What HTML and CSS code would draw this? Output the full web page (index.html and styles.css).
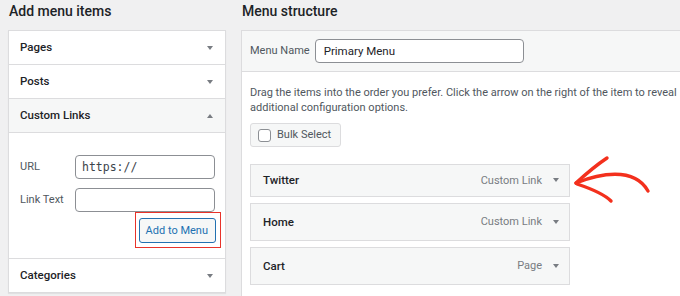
FILE: index.html
```html
<!DOCTYPE html>
<html>

<head>
	<meta charset="utf-8">
	<title>Menus</title>
	<meta name="viewport" content="width=device-width, initial-scale=1.0">
	<link rel="stylesheet" href="styles.css">
</head>

<body>
	<div class="page">
		<div class="col-left">
			<h2>Add menu items</h2>
			<div class="accordion">
				<div class="acc-row">Pages <span class="caret"></span></div>
				<div class="acc-row">Posts <span class="caret"></span></div>
				<div class="acc-row open">Custom Links <span class="caret up"></span></div>
				<div class="acc-body">
					<div class="field">
						<label>URL</label>
						<input type="text" class="mono" value="https://">
					</div>
					<div class="field">
						<label>Link Text</label>
						<input type="text">
					</div>
					<div class="btn-row">
						<div class="highlight">
							<button class="add-btn">Add to Menu</button>
						</div>
					</div>
				</div>
				<div class="acc-row">Categories <span class="caret"></span></div>
			</div>
		</div>

		<div class="col-right">
			<h2>Menu structure</h2>
			<div class="structure">
				<div class="struct-head">
					<label>Menu Name</label>
					<input type="text" class="name-input" value="Primary Menu">
				</div>
				<div class="struct-body">
					<p class="hint">Drag the items into the order you prefer. Click the arrow on the right of the item to reveal additional configuration options.</p>
					<div class="bulk"><span class="check"></span>Bulk Select</div>
					<ul class="items">
						<li class="item first">Twitter <span class="meta">Custom Link <span class="caret"></span></span></li>
						<li class="item">Home <span class="meta">Custom Link <span class="caret"></span></span></li>
						<li class="item">Cart <span class="meta">Page <span class="caret"></span></span></li>
					</ul>
				</div>
			</div>
		</div>
	</div>

	<!-- hand drawn pointer -->
	<svg class="pointer" viewBox="0 0 680 296" width="680" height="296">
		<g fill="none" stroke="#f3301d" stroke-width="3.4" stroke-linecap="round" stroke-linejoin="round">
			<path d="M576 183 C 598 174, 634 166, 648 191" />
			<path d="M576 183 C 588 172, 598 164, 607 158" />
			<path d="M577 184 C 592 189, 604 194, 611 201" />
		</g>
	</svg>
</body>

</html>
```

FILE: styles.css
```css
:root {
	--bg: #f0f0f1;
	--border: #dcdcde;
	--light: #f6f7f7;
	--text: #1d2327;
	--muted: #50575e;
	--blue: #2271b1;
}

body {
	margin: 0;
	background: var(--bg);
	color: var(--text);
	font: 11px/1.4 Roboto, 'Noto Sans', sans-serif;
	overflow: hidden;
}

.page {
	display: flex;
	gap: 15px;
	padding-left: 8px;
	width: 672px;
	height: 296px;
	overflow: hidden;
}

h2 {
	margin: 0;
	height: 30px;
	font-size: 14px;
	font-weight: 500;
	line-height: 23px;
	padding-left: 1px;
}

.col-left {
	width: 218px;
	flex: none;
}

.accordion {
	background: #fff;
	border: 1px solid var(--border);
	box-shadow: 0 1px 1px rgba(0, 0, 0, 0.06);
}

.acc-row {
	height: 33px;
	display: flex;
	align-items: center;
	justify-content: space-between;
	padding: 0 12px 0 11px;
	font-size: 11.5px;
	font-weight: 500;
	border-bottom: 1px solid var(--border);
}

.acc-row:last-child {
	border-bottom: none;
}

.acc-row.open {
	background: var(--light);
}

.caret {
	width: 0;
	height: 0;
	border-left: 3.5px solid transparent;
	border-right: 3.5px solid transparent;
	border-top: 4px solid #787c82;
	display: inline-block;
}

.caret.up {
	border-top: none;
	border-bottom: 4px solid #787c82;
}

.acc-body {
	border-bottom: 1px solid var(--border);
	padding: 22px 4px 10px 11px;
}

.field {
	display: flex;
	align-items: center;
	margin-bottom: 9px;
}

.field label {
	width: 55px;
	color: var(--muted);
	font-size: 11px;
}

input {
	width: 140px;
	height: 24px;
	box-sizing: border-box;
	border: 1px solid #8c8f94;
	border-radius: 4px;
	padding: 0 6px;
	font: 11.5px Roboto, sans-serif;
	color: var(--text);
	background: #fff;
}

input.mono {
	font-family: 'DejaVu Sans Mono', monospace;
	font-size: 11.5px;
	color: #3c434a;
}

.btn-row {
	display: flex;
	justify-content: flex-end;
	margin-top: -9px;
}

.highlight {
	border: 1.5px solid #e8332a;
	padding: 5px 4px 4px 3px;
}

.add-btn {
	display: block;
	height: 25px;
	padding: 0 7px 0 6px;
	background: var(--light);
	color: var(--blue);
	border: 1px solid var(--blue);
	border-radius: 3px;
	font: 11px Roboto, sans-serif;
}

.col-right {
	flex: 1;
}

.structure {
	background: #fff;
	border: 1px solid var(--border);
	border-right: none;
	min-height: 280px;
}

.struct-head {
	background: var(--light);
	border-bottom: 1px solid var(--border);
	height: 40px;
	display: flex;
	align-items: center;
	gap: 5px;
	padding-left: 8px;
}

.struct-head label {
	color: var(--muted);
	font-size: 11px;
}

.name-input {
	width: 209px;
	height: 24px;
	padding: 0 8px;
	font-size: 11.5px;
}

.struct-body {
	padding: 13px 8px 5px;
}

.hint {
	margin: 0;
	width: 430px;
	color: var(--muted);
	line-height: 15px;
}

.bulk {
	margin-top: 8px;
	display: inline-flex;
	align-items: center;
	gap: 6px;
	height: 22px;
	padding: 0 9px 0 7px;
	background: var(--light);
	border: 1px solid var(--border);
	border-radius: 3px;
	color: var(--muted);
}

.check {
	width: 11px;
	height: 11px;
	border: 1px solid #8c8f94;
	border-radius: 3px;
	background: #fff;
}

.items {
	list-style: none;
	margin: 17px 0 0;
	padding: 0;
	width: 320px;
}

.item {
	height: 38px;
	box-sizing: border-box;
	margin-bottom: 6px;
	padding: 0 10px 0 12px;
	background: var(--light);
	border: 1px solid var(--border);
	display: flex;
	align-items: center;
	justify-content: space-between;
	font-weight: 500;
	font-size: 11.5px;
}

.item.first {
	height: 33px;
}

.meta {
	font-weight: 400;
	font-size: 11px;
	color: #787c82;
	display: flex;
	align-items: center;
	gap: 11px;
}

.pointer {
	position: absolute;
	left: 0;
	top: 0;
	pointer-events: none;
}
```
